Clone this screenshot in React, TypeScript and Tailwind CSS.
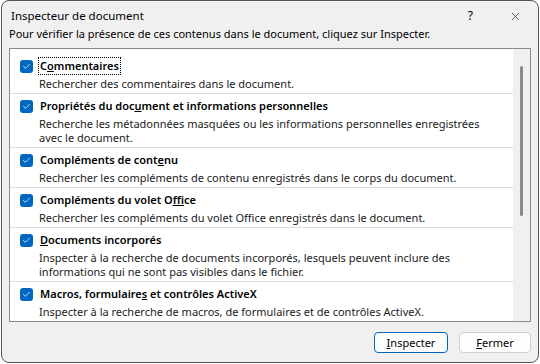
import { Check, X } from 'lucide-react';
import type { ReactNode } from 'react';

type Item = { title: ReactNode; desc: ReactNode; focus?: boolean };

const items: Item[] = [
  {
    title: <>C<u>o</u>mmentaires</>,
    desc: 'Rechercher des commentaires dans le document.',
    focus: true,
  },
  {
    title: <>Propriétés du doc<u>u</u>ment et informations personnelles</>,
    desc: (
      <>
        Recherche les métadonnées masquées ou les informations personnelles enregistrées
        <br />
        avec le document.
      </>
    ),
  },
  {
    title: <>Compléments de cont<u>e</u>nu</>,
    desc: 'Rechercher les compléments de contenu enregistrés dans le corps du document.',
  },
  {
    title: <>Compléments du volet O<u>f</u>fice</>,
    desc: 'Rechercher les compléments du volet Office enregistrés dans le document.',
  },
  {
    title: <><u>D</u>ocuments incorporés</>,
    desc: (
      <>
        Inspecter à la recherche de documents incorporés, lesquels peuvent inclure des
        <br />
        informations qui ne sont pas visibles dans le fichier.
      </>
    ),
  },
  {
    title: <>Macros, formulaire<u>s</u> et contrôles ActiveX</>,
    desc: 'Inspecter à la recherche de macros, de formulaires et de contrôles ActiveX.',
  },
];

function Row({ item, first }: { item: Item; first: boolean }) {
  return (
    <div className={`pl-[10px] pt-[4px] pb-[2px] ${first ? '' : 'border-t border-[#dcdcdc]'}`}>
      <div className="flex items-center h-[16px]">
        <div className="w-[13px] h-[13px] rounded-[3px] bg-[#0067c0] flex items-center justify-center shrink-0">
          <Check size={9} strokeWidth={2} color="#ffffff" />
        </div>
        <span
          className={`ml-[6px] font-semibold leading-[16px] px-[1px] whitespace-nowrap ${
            item.focus ? 'outline outline-1 outline-dotted outline-black' : ''
          }`}
        >
          {item.title}
        </span>
      </div>
      <div className="pl-[19px] mt-[3px] leading-[14px] text-[#1a1a1a] whitespace-nowrap">{item.desc}</div>
    </div>
  );
}

export default function App() {
  return (
    <div className="w-[540px] h-[364px] bg-white">
      <div
        className="w-[538px] h-[363px] ml-[1px] rounded-[8px] border border-[#555555] bg-[#f0f0f0] text-[11px] text-black flex flex-col"
        style={{ fontFamily: '"Noto Sans", sans-serif' }}
      >
        <div className="flex items-center h-[16px] mt-[7px] pl-[9px] pr-[16px] leading-[16px]">
          <span className="flex-1 text-[11.5px]">Inspecteur de document</span>
          <span className="text-[12px] mr-[36px]">?</span>
          <X size={13} strokeWidth={1.2} color="#222222" />
        </div>
        <div className="mt-[2px] pl-[7px] leading-[16px]">
          Pour vérifier la présence de ces contenus dans le document, cliquez sur Inspecter.
        </div>
        <div className="mt-[6px] ml-[7px] w-[522px] h-[274px] border border-[#8a8a8a] bg-white flex overflow-hidden">
          <div className="flex-1 pt-[5px] overflow-hidden">
            {items.map((it, i) => (
              <Row key={i} item={it} first={i === 0} />
            ))}
          </div>
          <div className="w-[17px] bg-[#f0f0f0] flex justify-center pt-[17px]">
            <div className="w-[3px] h-[150px] bg-[#8a8a8a] rounded-full" />
          </div>
        </div>
        <div className="flex justify-end gap-[11px] pr-[7px] mt-[10px]">
          <button className="w-[74px] h-[21px] rounded-[4px] border border-[#0067c0] bg-[#fdfdfd] leading-[18px]">
            <u>I</u>nspecter
          </button>
          <button className="w-[72px] h-[21px] rounded-[4px] border border-[#d0d0d0] bg-[#fdfdfd] leading-[18px]">
            <u>F</u>ermer
          </button>
        </div>
      </div>
    </div>
  );
}
